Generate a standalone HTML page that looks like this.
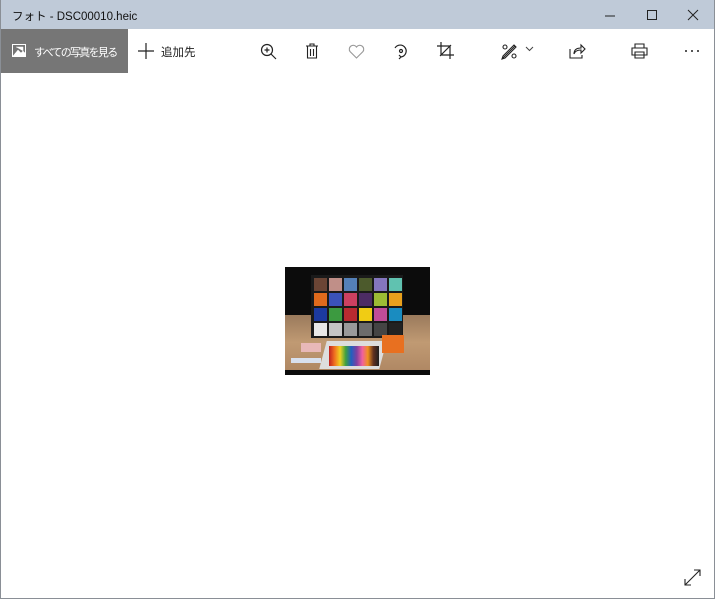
<!DOCTYPE html>
<html><head><meta charset="utf-8"><style>
body{margin:0;width:715px;height:600px;overflow:hidden;background:#fff;font-family:"Liberation Sans","Noto Sans CJK JP",sans-serif;position:relative}
.win{position:absolute;left:0;top:0;width:713px;height:598px;border:1px solid #8a8f96;border-top:none}
.title{position:absolute;left:0;top:0;width:715px;height:29px;background:#bfcad8;}
.title span{position:absolute;left:12px;top:8px;font-size:11.5px;color:#111;white-space:nowrap}
.ab{position:absolute;left:0;top:29px;width:128px;height:44px;background:#767676;color:#fff;font-size:11px;overflow:hidden}
.t{position:absolute;font-size:11.5px;white-space:nowrap}
svg{position:absolute}
.img{position:absolute;left:285px;top:267px;width:145px;height:108px;background:#0c0c0c;overflow:hidden}
.p{position:absolute;width:13px;height:13px}
</style></head><body>
<div class="title"><span>フォト - DSC00010.heic</span>
<svg style="left:604px;top:10px" width="12" height="12"><line x1="1" y1="6" x2="11" y2="6" stroke="#222"/></svg>
<svg style="left:646px;top:9px" width="12" height="12"><rect x="1.5" y="1.5" width="9" height="9" fill="none" stroke="#222"/></svg>
<svg style="left:687px;top:9px" width="12" height="12"><path d="M1 1L11 11M11 1L1 11" stroke="#222"/></svg>
</div>
<div class="ab">
<svg style="left:12px;top:15px" width="14" height="13"><rect x="0.5" y="0.5" width="13" height="12" fill="none" stroke="#fff"/><path d="M1 12L6 6L9 9L11 7L13 9V12Z M4 3h7v4" fill="#fff" stroke="#fff" stroke-width="0.5"/></svg>
<span style="position:absolute;left:34px;top:15px;white-space:nowrap;letter-spacing:-1.7px">すべての写真を見る</span></div>
<svg style="left:138px;top:43px" width="16" height="16"><path d="M8 0V16M0 8H16" stroke="#222" stroke-width="1.2"/></svg>
<span class="t" style="left:161px;top:44px;color:#222">追加先</span>
<svg style="left:260px;top:43px" width="18" height="18" fill="none" stroke="#222" stroke-width="1.2"><circle cx="7" cy="7" r="5.5"/><path d="M11 11L16 16M4.5 7h5M7 4.5v5"/></svg>
<svg style="left:305px;top:43px" width="14" height="16" fill="none" stroke="#222" stroke-width="1.1"><path d="M1 3H13M5 3V1H9V3M2.5 3V15H11.5V3M5.5 6V13M8.5 6V13"/></svg>
<svg style="left:348px;top:44px" width="17" height="15" fill="none" stroke="#999" stroke-width="1.1"><path d="M8.5 14L2 7.5A3.5 3.5 0 0 1 8.5 3A3.5 3.5 0 0 1 15 7.5Z"/></svg>
<svg style="left:392px;top:42px" width="17" height="18" fill="none" stroke="#222" stroke-width="1.2"><path d="M3 6A6 6 0 1 1 9 15"/><circle cx="9" cy="9" r="1.5"/><path d="M9 15L7 13M9 15L7 17"/></svg>
<svg style="left:437px;top:42px" width="17" height="17" fill="none" stroke="#222" stroke-width="1.2"><path d="M4 0V13H17M0 4H13V17M3 14L14 3"/></svg>
<svg style="left:501px;top:43px" width="17" height="17" fill="none" stroke="#222" stroke-width="1.1"><path d="M2 15L14 3M13 2L15 4L4 15L1 16L2 13Z M2 4A2 2 0 1 0 6 4A2 2 0 1 0 2 4M11 13A2 2 0 1 0 15 13A2 2 0 1 0 11 13"/></svg>
<svg style="left:525px;top:46px" width="9" height="6" fill="none" stroke="#444"><path d="M1 1L4.5 4.5L8 1"/></svg>
<svg style="left:569px;top:43px" width="17" height="16" fill="none" stroke="#222" stroke-width="1.1"><path d="M1 6V15H13V12M5 11C5 6 9 5 12 5V2L16 6L12 10V7C9 7 6 8 5 11Z"/></svg>
<svg style="left:631px;top:43px" width="17" height="16" fill="none" stroke="#222" stroke-width="1.1"><path d="M4 5V1H13V5M1 5H16V12H1ZM4 9H13V15H4Z"/></svg>
<svg style="left:684px;top:49px" width="16" height="4" fill="#222"><circle cx="2" cy="2" r="1"/><circle cx="8" cy="2" r="1"/><circle cx="14" cy="2" r="1"/></svg>
<div class="img">
<div style="position:absolute;left:0;top:48px;width:145px;height:55px;background:linear-gradient(#9a7a5c,#c09a73 50%,#b08864)"></div>
<div style="position:absolute;left:26px;top:8px;width:92px;height:63px;background:#1a1a1a"></div>
<div class="p" style="left:29px;top:11px;background:#6b4535"></div><div class="p" style="left:44px;top:11px;background:#c08f88"></div><div class="p" style="left:59px;top:11px;background:#5480b8"></div><div class="p" style="left:74px;top:11px;background:#4c5a2c"></div><div class="p" style="left:89px;top:11px;background:#8476be"></div><div class="p" style="left:104px;top:11px;background:#60c2b0"></div>
<div class="p" style="left:29px;top:26px;background:#e06a1c"></div><div class="p" style="left:44px;top:26px;background:#3b52b8"></div><div class="p" style="left:59px;top:26px;background:#cc4060"></div><div class="p" style="left:74px;top:26px;background:#4c2c64"></div><div class="p" style="left:89px;top:26px;background:#9cbc34"></div><div class="p" style="left:104px;top:26px;background:#e8a01c"></div>
<div class="p" style="left:29px;top:41px;background:#1c3aa0"></div><div class="p" style="left:44px;top:41px;background:#3c9a40"></div><div class="p" style="left:59px;top:41px;background:#b82a30"></div><div class="p" style="left:74px;top:41px;background:#f0cc14"></div><div class="p" style="left:89px;top:41px;background:#c04c98"></div><div class="p" style="left:104px;top:41px;background:#1a8cc0"></div>
<div class="p" style="left:29px;top:56px;background:#e8e8e8"></div><div class="p" style="left:44px;top:56px;background:#c4c4c4"></div><div class="p" style="left:59px;top:56px;background:#9a9a9a"></div><div class="p" style="left:74px;top:56px;background:#6c6c6c"></div><div class="p" style="left:89px;top:56px;background:#444"></div><div class="p" style="left:104px;top:56px;background:#222"></div>
<div style="position:absolute;left:38px;top:74px;width:60px;height:28px;background:#ddd;transform:skewX(-15deg)"></div>
<div style="position:absolute;left:44px;top:79px;width:50px;height:20px;background:linear-gradient(90deg,#c02020,#f07020,#f0d020,#40a040,#2060c0,#8040a0,#f060a0,#f09020,#603020,#202020)"></div>
<div style="position:absolute;left:97px;top:68px;width:22px;height:18px;background:#e87020"></div>
<div style="position:absolute;left:16px;top:76px;width:20px;height:9px;background:#e8b8b8"></div>
<div style="position:absolute;left:6px;top:91px;width:30px;height:5px;background:#d8e0ee"></div>
</div>
<svg style="left:684px;top:569px" width="17" height="17" fill="none" stroke="#222" stroke-width="1.1"><path d="M1 16L16 1M1 10V16H7M10 1H16V7"/></svg>
<div class="win"></div>
</body></html>
